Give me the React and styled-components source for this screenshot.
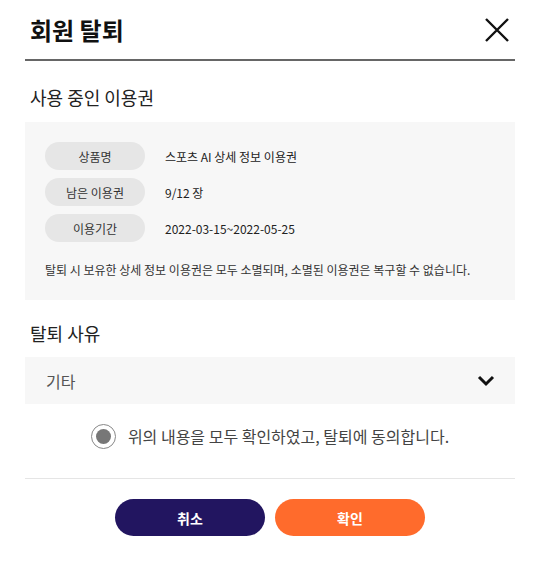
import styled, { createGlobalStyle } from "styled-components";

const GlobalStyle = createGlobalStyle`
  body {
    margin: 0;
    background: #fff;
    font-family: "Noto Sans CJK KR", "Noto Sans", sans-serif;
    color: #222;
  }
`;

const Modal = styled.div`
  width: 540px;
  box-sizing: border-box;
  padding: 0 25px;
`;

const Header = styled.header`
  display: flex;
  align-items: center;
  justify-content: space-between;
  height: 59px;
  padding: 0 5px 0 5px;
  border-bottom: 2px solid #666;
`;

const Title = styled.h1`
  margin: 0;
  font-size: 24px;
  font-weight: 700;
  line-height: 30px;
  color: #111;
`;

const CloseButton = styled.button`
  border: 0;
  background: none;
  padding: 0;
  width: 26px;
  height: 26px;
  display: flex;
  align-items: center;
  justify-content: center;
  cursor: pointer;
`;

const SectionTitle = styled.h2`
  margin: ${(p) => p.$top}px 0 0;
  padding-left: 5px;
  font-size: 18px;
  font-weight: 400;
  line-height: 24px;
  color: #222;
`;

const InfoBox = styled.div`
  margin-top: 13px;
  background: #f7f7f7;
  padding: 20px 20px 22px;
`;

const InfoList = styled.dl`
  margin: 0;
  display: flex;
  flex-direction: column;
  gap: 8px;
`;

const InfoRow = styled.div`
  display: flex;
  align-items: center;
  gap: 20px;
`;

const Pill = styled.dt`
  width: 100px;
  height: 28px;
  border-radius: 14px;
  background: #e6e6e6;
  font-size: 12px;
  color: #333;
  display: flex;
  align-items: center;
  justify-content: center;
`;

const Value = styled.dd`
  margin: 0;
  font-size: 12px;
  color: #222;
`;

const Notice = styled.p`
  margin: 20px 0 0;
  font-size: 12px;
  line-height: 16px;
  color: #333;
`;

const Select = styled.div`
  margin-top: 12px;
  height: 47px;
  background: #f7f7f7;
  display: flex;
  align-items: center;
  justify-content: space-between;
  padding: 0 20px 0 21px;
  font-size: 16px;
  color: #555;
`;

const AgreeRow = styled.label`
  margin-top: 20px;
  display: flex;
  align-items: center;
  justify-content: center;
  gap: 12px;
  height: 24px;
  font-size: 16px;
  color: #444;
`;

const Radio = styled.span`
  width: 25px;
  height: 25px;
  box-sizing: border-box;
  border: 1.5px solid #888;
  border-radius: 50%;
  display: flex;
  align-items: center;
  justify-content: center;
  &::after {
    content: "";
    width: 15px;
    height: 15px;
    border-radius: 50%;
    background: #777;
  }
`;

const Divider = styled.hr`
  margin: 30px 0 0;
  border: 0;
  border-top: 1px solid #e5e5e5;
`;

const Actions = styled.div`
  margin-top: 20px;
  display: flex;
  justify-content: center;
  gap: 10px;
`;

const Button = styled.button`
  width: 150px;
  height: 37px;
  border: 0;
  border-radius: 19px;
  background: ${(p) => (p.$primary ? "#ff6b2c" : "#221560")};
  color: #fff;
  font-family: inherit;
  font-size: 14px;
  font-weight: 700;
  cursor: pointer;
`;

const info = [
  { label: "상품명", value: "스포츠 AI 상세 정보 이용권" },
  { label: "남은 이용권", value: "9/12 장" },
  { label: "이용기간", value: "2022-03-15~2022-05-25" },
];

const App = () => (
  <>
    <GlobalStyle />
    <Modal>
      <Header>
        <Title>회원 탈퇴</Title>
        <CloseButton aria-label="닫기">
          <svg width="26" height="26" viewBox="0 0 26 26">
            <path d="M2 2L24 24M24 2L2 24" stroke="#111" strokeWidth="2.4" fill="none" />
          </svg>
        </CloseButton>
      </Header>

      <SectionTitle $top={24}>사용 중인 이용권</SectionTitle>
      <InfoBox>
        <InfoList>
          {info.map((row) => (
            <InfoRow key={row.label}>
              <Pill>{row.label}</Pill>
              <Value>{row.value}</Value>
            </InfoRow>
          ))}
        </InfoList>
        <Notice>
          탈퇴 시 보유한 상세 정보 이용권은 모두 소멸되며, 소멸된 이용권은 복구할 수 없습니다.
        </Notice>
      </InfoBox>

      <SectionTitle $top={21}>탈퇴 사유</SectionTitle>
      <Select>
        <span>기타</span>
        <svg width="18" height="12" viewBox="0 0 18 12">
          <path d="M2 2L9 9L16 2" stroke="#111" strokeWidth="3" fill="none" />
        </svg>
      </Select>

      <AgreeRow>
        <Radio />
        위의 내용을 모두 확인하였고, 탈퇴에 동의합니다.
      </AgreeRow>

      <Divider />

      <Actions>
        <Button>취소</Button>
        <Button $primary>확인</Button>
      </Actions>
    </Modal>
  </>
);

export default App;
